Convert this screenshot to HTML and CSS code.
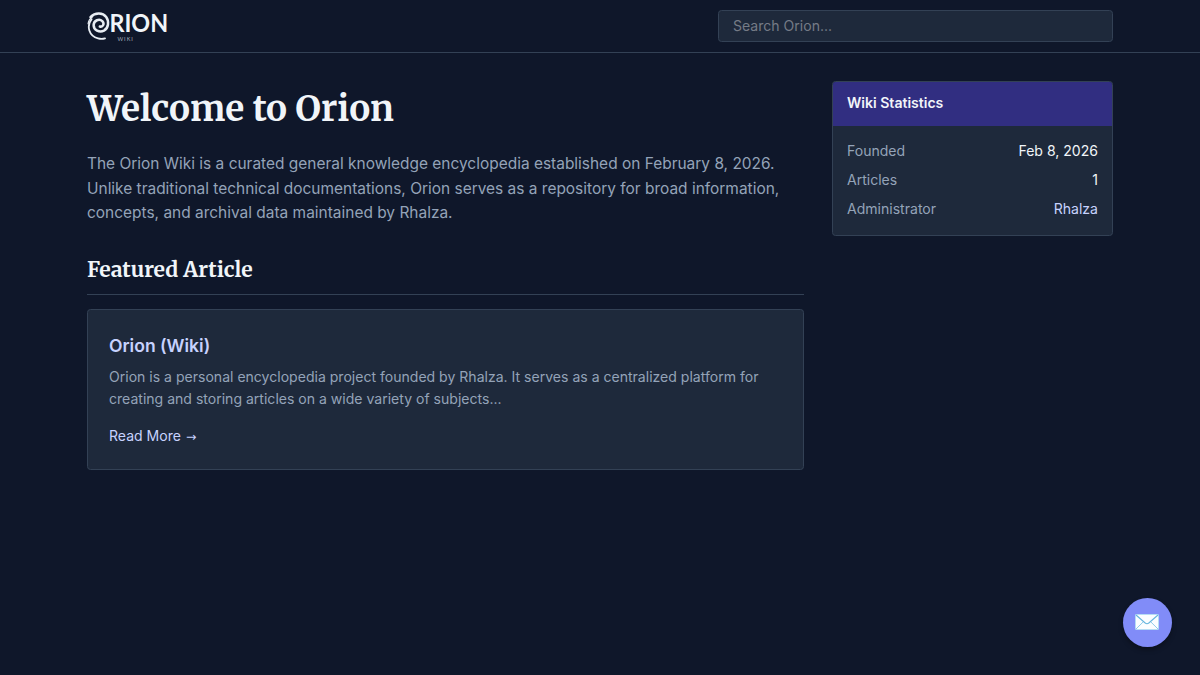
FILE: index.html
```html
<!DOCTYPE html>
<html lang="en">
<head>
  <meta charset="UTF-8">
  <meta name="viewport" content="width=device-width, initial-scale=1.0">
  <title>Orion Wiki</title>
  <link rel="stylesheet" href="styles.css">
</head>
<body>
  <header class="site-header">
    <div class="header-inner">
      <a href="#" class="logo" aria-label="Orion Wiki">
        <svg width="86" height="40" viewBox="0 -4.7 86 40">
          <!-- Spiral O -->
          <g fill="none" stroke="#e8edf3" stroke-linecap="round">
            <path d="M3.5 6.5C8 1.8 15.6 1.6 19.2 6.2C22.4 10.6 21.5 17.4 17 20C12.3 22.2 6.6 19.4 6.6 14.4C6.8 9.6 12.3 7.6 15.3 10.4C17.8 13 16 16.6 12.8 15.8" stroke-width="2.5"/>
            <path d="M4.6 8.4C-.8 15.4 1.9 25.5 11 27.6C13.9 28.4 16 28.2 18 27.6" stroke-width="1.8"/>
            <path d="M1.1 13C1.4 10.4 3 7.8 5.5 6" stroke-width="1.2"/>
          </g>
          <text class="logo-name" x="22.5" y="21.1" textLength="58.6" lengthAdjust="spacingAndGlyphs">RION</text>
          <text class="logo-sub" x="30.4" y="30.2" textLength="15.5">WIKI</text>
        </svg>
      </a>
      <input type="text" class="search" placeholder="Search Orion...">
    </div>
  </header>

  <main class="layout">
    <section class="content">
      <h1>Welcome to Orion</h1>
      <p class="lead">The Orion Wiki is a curated general knowledge encyclopedia established on February 8, 2026. Unlike traditional technical documentations, Orion serves as a repository for broad information, concepts, and archival data maintained by Rhalza.</p>
      <h2>Featured Article</h2>
      <article class="card">
        <h3><a href="#">Orion (Wiki)</a></h3>
        <p>Orion is a personal encyclopedia project founded by Rhalza. It serves as a centralized platform for creating and storing articles on a wide variety of subjects...</p>
        <a href="#" class="read-more">Read More <span class="arrow">→</span></a>
      </article>
    </section>

    <aside class="stats">
      <div class="stats-title">Wiki Statistics</div>
      <div class="stats-body">
        <div class="stats-row"><span>Founded</span><strong>Feb 8, 2026</strong></div>
        <div class="stats-row"><span>Articles</span><strong>1</strong></div>
        <div class="stats-row"><span>Administrator</span><a href="#">Rhalza</a></div>
      </div>
    </aside>
  </main>

  <button class="contact" aria-label="Contact">
    <svg width="24" height="16" viewBox="0 0 24 16">
      <rect x=".5" y=".5" width="23" height="15" rx=".8" fill="#fafdff" stroke="#b5dcf5"/>
      <path d="M1 15L8.6 7.5M23 15L15.4 7.5" fill="none" stroke="#83c5e8" stroke-width=".9"/>
      <path d="M1 1L10.2 9Q12 10.4 13.8 9L23 1" fill="none" stroke="#65b5de" stroke-width="1.1"/>
    </svg>
  </button>
</body>
</html>
```

FILE: styles.css
```css
* {
  box-sizing: border-box;
}
body {
  margin: 0;
  background: #0f172a;
  color: #f1f5f9;
  font-family: Inter, sans-serif;
  font-size: 14.05px;
  line-height: 1.6;
}
a {
  color: #c7d2fe;
  text-decoration: none;
}
.site-header {
  height: 53px;
  border-bottom: 1px solid #334155;
}
.header-inner {
  width: 1026px;
  height: 52px;
  margin: 0 auto;
  display: flex;
  justify-content: space-between;
  align-items: center;
}
.logo svg {
  display: block;
}
.logo-name {
  font: bold 24px Lato, sans-serif;
  fill: #f1f5f9;
}
.logo-sub {
  font: 5.5px Lato, sans-serif;
  fill: #a3adba;
}
.search {
  width: 395px;
  height: 32px;
  padding: 0 14px 2px;
  background: #1e293b;
  border: 1px solid #334155;
  border-radius: 3.5px;
  color: #f8fafc;
  font-family: inherit;
  font-size: 14.05px;
}
.search::placeholder {
  color: #757b86;
}
.layout {
  width: 1026px;
  margin: 0 auto;
  padding-top: 28px;
  display: grid;
  grid-template-columns: 717px 281px;
  gap: 28px;
  align-items: start;
}
h1, h2 {
  font-family: Merriweather, serif;
  font-weight: bold;
}
h1 {
  margin: 5px 0 20px;
  font-size: 35.13px;
  line-height: 46px;
}
.lead {
  margin: 0 0 27px;
  color: #94a3b8;
  font-size: 15.46px;
}
h2 {
  margin: 0 0 14px;
  padding-bottom: 7px;
  border-bottom: 1px solid #334155;
  font-size: 21.08px;
  line-height: 34px;
}
.card {
  height: 161px;
  padding: 22px 21px 20px;
  background: #1e293b;
  border: 1px solid #334155;
  border-radius: 3.5px;
}
.card h3 {
  margin: 0 0 6px;
  font-size: 17.56px;
  font-weight: 600;
  line-height: 28px;
}
.card p {
  margin: 0 0 15px;
  color: #94a3b8;
  line-height: 22px;
}
.read-more {
  display: block;
}
.arrow {
  margin-left: 1px;
  font-family: "DejaVu Sans", sans-serif;
  font-size: 12.5px;
}
.stats {
  overflow: hidden;
  background: #1e293b;
  border: 1px solid #334155;
  border-radius: 3.5px;
}
.stats-title {
  padding: 10px 14px 12px;
  background: #312e81;
  font-weight: 600;
  line-height: 22px;
}
.stats-body {
  padding: 13.5px 14px 7px;
  line-height: 22.4px;
}
.stats-row {
  display: flex;
  justify-content: space-between;
  margin-bottom: 7px;
}
.stats-row span {
  color: #94a3b8;
}
.stats-row strong {
  font-weight: normal;
}
.contact {
  position: fixed;
  right: 28px;
  bottom: 28px;
  width: 49px;
  height: 49px;
  padding: 0 1px 1px 0;
  display: flex;
  justify-content: center;
  align-items: center;
  background: #818cf8;
  border: none;
  border-radius: 50%;
  box-shadow: 0 3px 5px rgba(0, 0, 0, 0.3);
  cursor: pointer;
}
```
